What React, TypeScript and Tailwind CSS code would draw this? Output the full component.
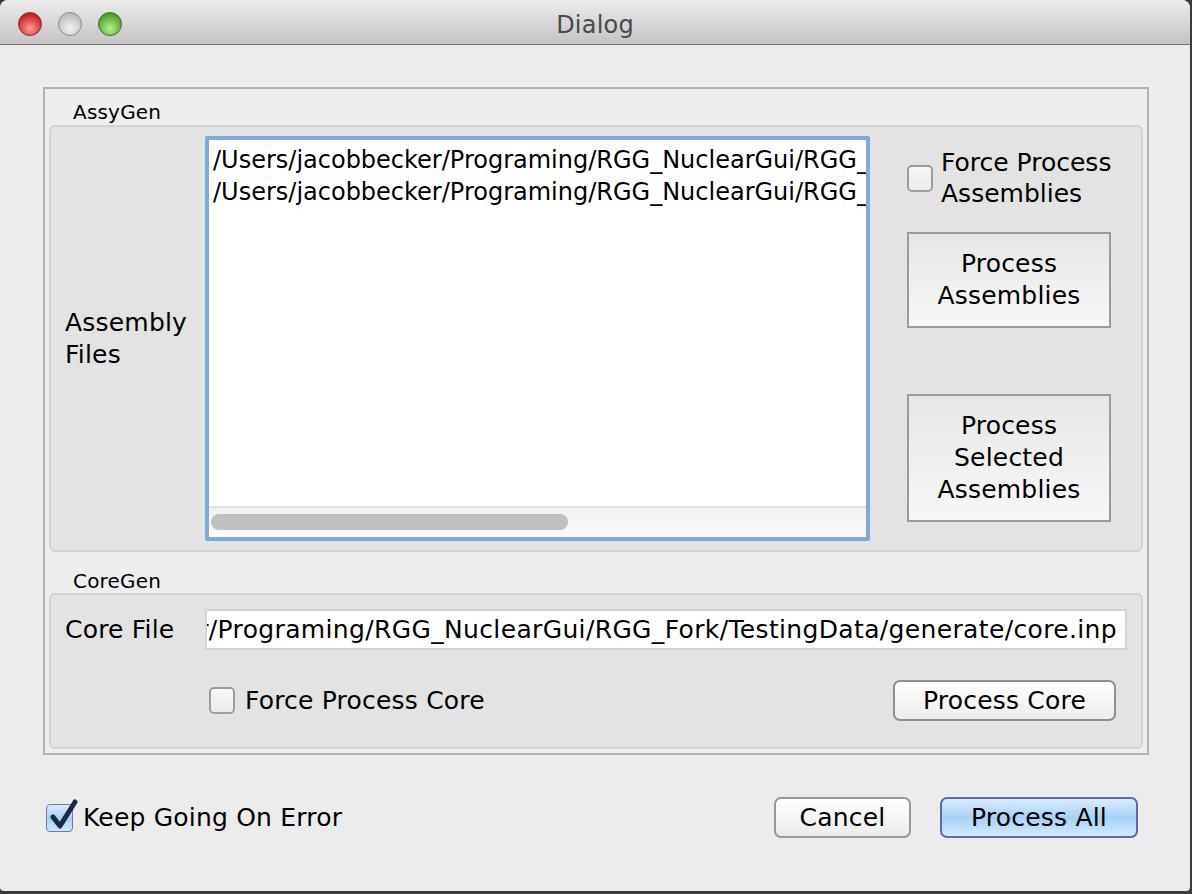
import React from "react";

const Light = ({ from, to, ring }: { from: string; to: string; ring: string }) => (
  <div
    className="w-[24px] h-[24px] rounded-full border"
    style={{ background: `radial-gradient(circle at 50% 70%, ${to} 0%, ${from} 75%)`, borderColor: ring }}
  />
);

const Check = ({ checked = false }: { checked?: boolean }) =>
  checked ? (
    <div className="relative w-[27px] h-[28px] rounded-[4px] border border-[#6d79a8] bg-linear-to-b from-[#d9ecfd] via-[#a6d0f5] to-[#cfe9ff]">
      <svg className="absolute left-[1px] top-[-6px]" width="34" height="32" viewBox="0 0 34 32">
        <path d="M5 18 L12 27 L27 3" fill="none" stroke="#1d2a45" strokeWidth="5" strokeLinecap="round" strokeLinejoin="round" />
      </svg>
    </div>
  ) : (
    <div className="w-[26px] h-[27px] shrink-0 rounded-[5px] border-2 border-[#9d9d9d] bg-linear-to-b from-[#f7f7f7] to-[#ebebeb]" />
  );

export default function App() {
  return (
    <div className="w-[1192px] h-[894px] bg-[#3b3b3b] font-['DejaVu_Sans',sans-serif] text-black tracking-[0.2px]">
      <div className="w-[1190px] h-[891px] rounded-t-[8px] rounded-b-[4px] overflow-hidden bg-[#ececec] flex flex-col">
        {/* title bar */}
        <div className="h-[45px] shrink-0 grid grid-cols-[1fr_auto_1fr] items-center bg-linear-to-b from-[#ececec] to-[#c4c4c4] border-b border-[#747474]">
          <div className="flex items-center gap-[16px] pl-[18px] pt-[4px]">
            <Light from="#c81e1e" to="#ff9a9a" ring="#8e2a2a" />
            <Light from="#bdbdbd" to="#f3f3f3" ring="#8a8a8a" />
            <Light from="#4c9e2a" to="#b9f089" ring="#3b6e25" />
          </div>
          <div className="text-[24px] text-[#4a4a4a] leading-none pt-[5px]">Dialog</div>
          <div />
        </div>

        {/* content */}
        <div className="flex-1 flex flex-col pl-[43px] pr-[41px] pt-[42px]">
          <div className="h-[668px] border-2 border-[#b3b3b3] bg-[#eeeeee] px-[4px] flex flex-col">
            <div className="h-[36px] flex items-end pl-[24px] pb-[1px] text-[20px] leading-[24px]">AssyGen</div>

            {/* AssyGen panel */}
            <div className="h-[427px] rounded-[6px] border-2 border-[#d2d2d2] bg-[#e3e3e3] flex items-stretch pt-[9px] pb-[9px]">
              <div className="w-[154px] shrink-0 pl-[14px] flex items-center text-[25px] leading-[32px]">
                <div>
                  Assembly
                  <br />
                  Files
                </div>
              </div>
              <div className="w-[665px] shrink-0 border-[4px] border-[#7fa9d8] rounded-[2px] bg-white flex flex-col overflow-hidden">
                <div className="flex-1 overflow-hidden pl-[4px] pt-[4px] text-[24px] tracking-normal leading-[32px] whitespace-nowrap">
                  <div>/Users/jacobbecker/Programing/RGG_NuclearGui/RGG_Fork/a1.inp</div>
                  <div>/Users/jacobbecker/Programing/RGG_NuclearGui/RGG_Fork/a2.inp</div>
                </div>
                <div className="h-[31px] shrink-0 border-t-2 border-[#e2e2e2] bg-linear-to-b from-[#f1f1f1] to-[#fbfbfb] flex items-center pl-[2px] pb-[2px]">
                  <div className="w-[357px] h-[16px] rounded-full bg-[#c1c1c1]" />
                </div>
              </div>
              <div className="flex-1 min-w-0 flex flex-col pl-[37px] pr-[30px]">
                <div className="flex items-center gap-[8px] pt-[11px] text-[25px] tracking-normal leading-[31px]">
                  <Check />
                  <div className="whitespace-nowrap">
                    Force Process
                    <br />
                    Assemblies
                  </div>
                </div>
                <div className="mt-[23px] h-[96px] border-2 border-[#9b9b9b] bg-linear-to-b from-[#e7e7e7] to-[#f7f7f7] flex items-center justify-center text-center text-[25px] leading-[32px]">
                  <div>
                    Process
                    <br />
                    Assemblies
                  </div>
                </div>
                <div className="mt-[66px] h-[128px] border-2 border-[#9b9b9b] bg-linear-to-b from-[#e7e7e7] to-[#f7f7f7] flex items-center justify-center text-center text-[25px] leading-[32px]">
                  <div>
                    Process
                    <br />
                    Selected
                    <br />
                    Assemblies
                  </div>
                </div>
              </div>
            </div>

            <div className="h-[41px] flex items-end pl-[24px] text-[20px] leading-[24px]">CoreGen</div>

            {/* CoreGen panel */}
            <div className="h-[156px] rounded-[6px] border-2 border-[#d2d2d2] bg-[#e3e3e3] flex flex-col pt-[14px] pl-[14px] pr-[14px]">
              <div className="flex items-center">
                <div className="w-[140px] shrink-0 text-[25px] leading-[32px]">Core File</div>
                <div className="flex-1 min-w-0 h-[41px] border-2 border-[#d3d3d3] bg-white overflow-hidden pr-[8px] text-[25px] tracking-[0.35px] leading-[37px] whitespace-nowrap [direction:rtl]">
                  <span className="[direction:ltr] [unicode-bidi:embed]">
                    /Users/jacobbecker/Programing/RGG_NuclearGui/RGG_Fork/TestingData/generate/core.inp
                  </span>
                </div>
              </div>
              <div className="flex items-center justify-between mt-[30px] pl-[144px] pr-[11px]">
                <div className="flex items-center gap-[10px] text-[25px] leading-[32px]">
                  <Check />
                  <div>Force Process Core</div>
                </div>
                <div className="w-[223px] h-[41px] rounded-[7px] border-2 border-[#8f8f8f] bg-linear-to-b from-[#ffffff] to-[#ececec] flex items-center justify-center text-[25px]">
                  Process Core
                </div>
              </div>
            </div>
          </div>

          {/* bottom row */}
          <div className="flex items-center mt-[42px] pl-[3px] pr-[11px]">
            <div className="flex items-center gap-[10px] text-[25px] leading-[32px]">
              <Check checked />
              <div>Keep Going On Error</div>
            </div>
            <div className="flex-1" />
            <div className="w-[137px] h-[41px] rounded-[7px] border-2 border-[#979797] bg-linear-to-b from-[#ffffff] to-[#ebebeb] flex items-center justify-center text-[25px]">
              Cancel
            </div>
            <div className="ml-[29px] w-[198px] h-[41px] rounded-[7px] border-2 border-[#5d6aa5] bg-linear-to-b from-[#dbecfc] via-[#a7d1f6] to-[#d1ebff] flex items-center justify-center text-[25px]">
              Process All
            </div>
          </div>
        </div>
      </div>
    </div>
  );
}
